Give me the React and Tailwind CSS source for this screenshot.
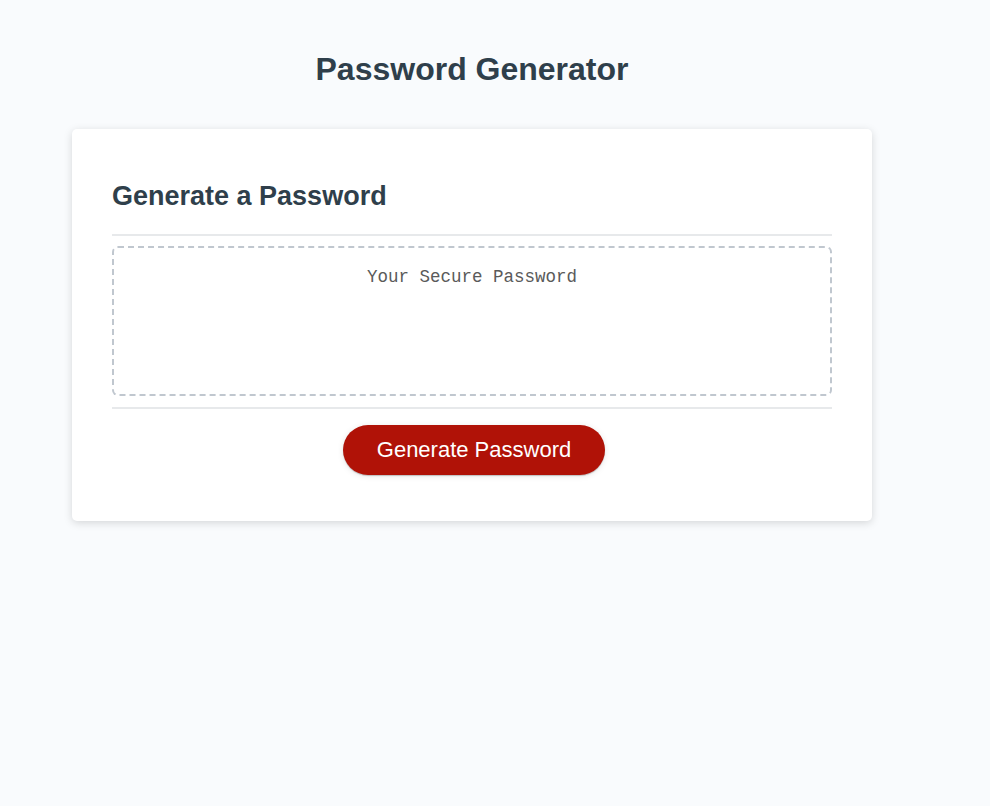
import React from "react";

const App = () => {
  return (
    <div className="min-h-[806px] bg-[#f9fbfd] font-['Liberation_Sans',Arial,sans-serif] text-[#2f3f4b]">
      <div className="w-[944px] px-5 pt-[30px]">
        {/* Header */}
        <header className="px-5 pb-5 text-center">
          <h1 className="mt-[21px] mb-[21px] text-[32px] leading-[37px] font-bold">Password Generator</h1>
        </header>

        {/* Card */}
        <div className="mx-auto max-w-[800px] rounded-[5px] bg-white px-10 py-[30px] text-[18px] shadow-[0_2px_8px_0_rgba(0,0,0,0.15)]">
          <div>
            <h2 className="my-[22px] text-[27px] leading-[31px] font-bold">Generate a Password</h2>
            <div className="h-[2px] w-full bg-[#e7e9eb]" />
          </div>

          <div className="min-h-[100px]">
            <textarea
              readOnly
              placeholder="Your Secure Password"
              className="mt-[10px] mb-[11px] block h-[150px] w-full resize-none overflow-hidden rounded-[6px] border-2 border-dashed border-[#c0c7cf] px-[15px] pt-[18px] text-center font-['Liberation_Mono',monospace] text-[17.5px] leading-[22px] outline-none placeholder:text-[#5a5a5a]"
            />
          </div>

          <div className="text-center">
            <div className="h-[2px] w-full bg-[#e7e9eb]" />
            <button className="mt-4 mr-4 mb-4 ml-5 inline-block cursor-pointer rounded-[25px] bg-[#b01207] px-[34px] py-[14px] text-[22px] leading-[22px] text-white shadow-[0_1px_6px_0_rgba(0,0,0,0.1),0_1px_1px_0_rgba(0,0,0,0.2)]">
              Generate Password
            </button>
          </div>
        </div>
      </div>
    </div>
  );
};

export default App;
